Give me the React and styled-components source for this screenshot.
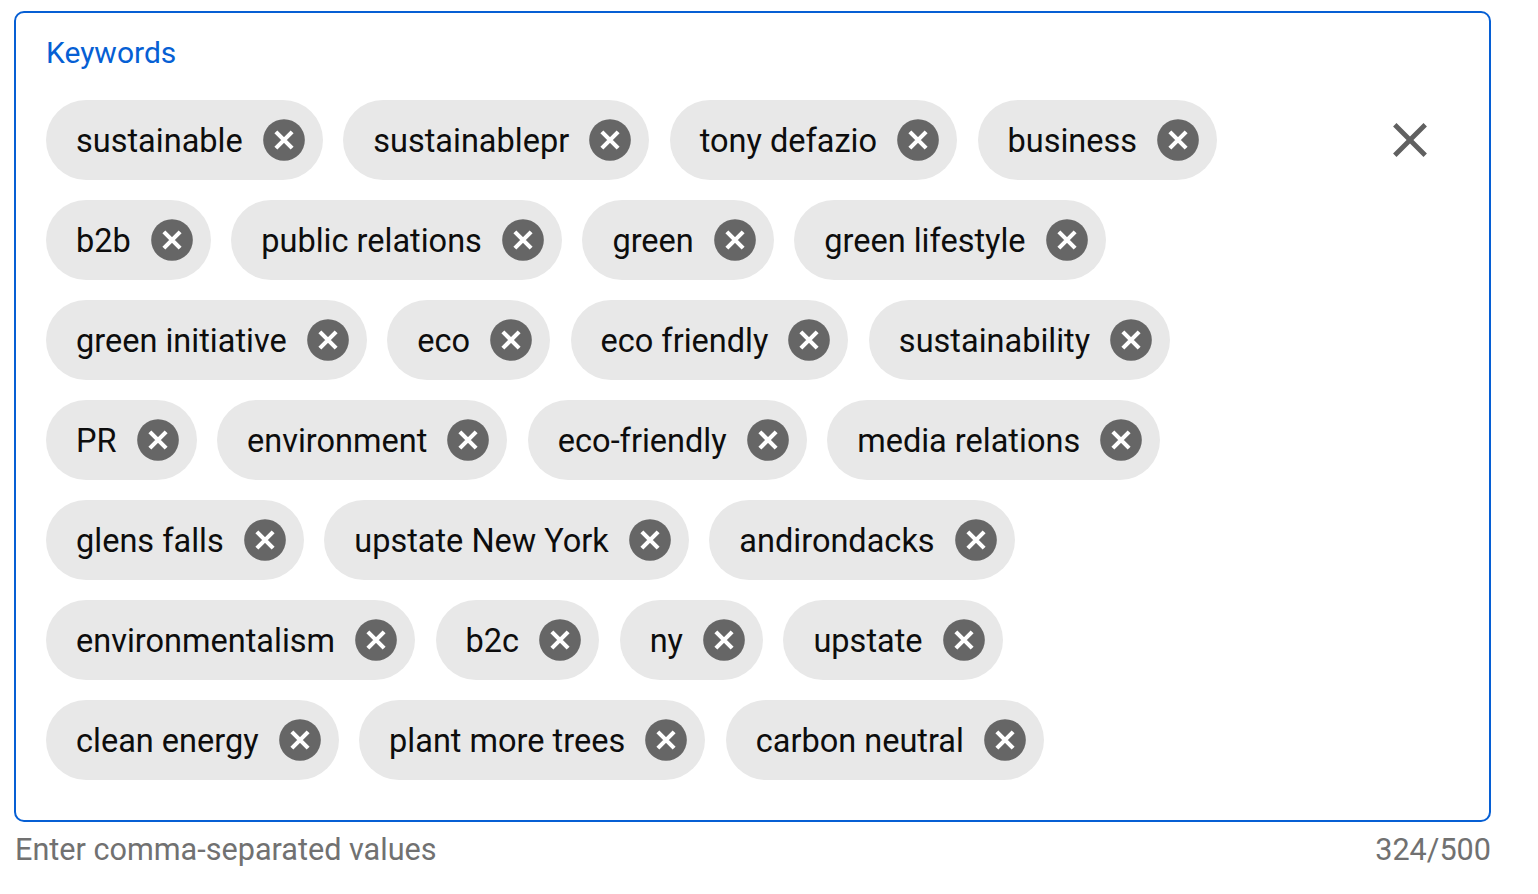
import React from 'react';
import styled, { createGlobalStyle } from 'styled-components';

const GlobalStyle = createGlobalStyle`
	html, body {
		margin: 0;
		padding: 0;
		background: #fff;
		font-family: Roboto, "Noto Sans", Arial, sans-serif;
	}
`;

const Page = styled.div`
	padding: 11px 0 0 14px;
	width: 1477px;
`;

const Field = styled.div`
	box-sizing: border-box;
	width: 100%;
	border: 2px solid #065fd4;
	border-radius: 10px;
	padding: 22px 0 40px 30px;
`;

const Label = styled.div`
	font-size: 30px;
	line-height: 36px;
	color: #065fd4;
	margin-bottom: 29px;
`;

const Body = styled.div`
	display: flex;
	align-items: flex-start;
`;

const ChipList = styled.div`
	flex: 1;
	display: flex;
	flex-wrap: wrap;
	gap: 20px 20.5px;
	margin-right: 120px;
`;

const Chip = styled.div`
	display: flex;
	align-items: center;
	height: 80px;
	box-sizing: border-box;
	padding: 0 14px 0 30px;
	border-radius: 40px;
	background: #e8e8e8;
	color: #0d0d0d;
	font-size: 32.5px;
	white-space: nowrap;
`;

const ChipText = styled.span`
	margin-right: 16px;
	line-height: 40px;
	padding-top: 2px;
`;

const RemoveIcon = styled.svg`
	width: 50px;
	height: 50px;
	flex: none;
	fill: #666;
`;

const ClearButton = styled.svg`
	width: 58px;
	height: 58px;
	flex: none;
	margin: 11px 50px 0 0;
	fill: #606060;
`;

const Footer = styled.div`
	display: flex;
	justify-content: space-between;
	margin-top: 10px;
	padding-left: 1px;
	font-size: 30.6px;
	line-height: 36px;
	color: #717171;
`;

const keywords = [
	'sustainable', 'sustainablepr', 'tony defazio', 'business',
	'b2b', 'public relations', 'green', 'green lifestyle',
	'green initiative', 'eco', 'eco friendly', 'sustainability',
	'PR', 'environment', 'eco-friendly', 'media relations',
	'glens falls', 'upstate New York', 'andirondacks',
	'environmentalism', 'b2c', 'ny', 'upstate',
	'clean energy', 'plant more trees', 'carbon neutral'
];

function KeywordChip({ text }) {
	return (
		<Chip>
			<ChipText>{text}</ChipText>
			<RemoveIcon viewBox="0 0 24 24">
				<circle cx="12" cy="12" r="10" />
				<path d="M8.1 8.1 L15.9 15.9 M15.9 8.1 L8.1 15.9" stroke="#fff" strokeWidth="2" fill="none" />
			</RemoveIcon>
		</Chip>
	);
}

export default function App() {
	return (
		<Page>
			<GlobalStyle />
			<Field>
				<Label>Keywords</Label>
				<Body>
					<ChipList>
						{keywords.map((k) => <KeywordChip key={k} text={k} />)}
					</ChipList>
					<ClearButton viewBox="0 0 24 24">
						<path d="M19 6.41L17.59 5 12 10.59 6.41 5 5 6.41 10.59 12 5 17.59 6.41 19 12 13.41 17.59 19 19 17.59 13.41 12z" />
					</ClearButton>
				</Body>
			</Field>
			<Footer>
				<span>Enter comma-separated values</span>
				<span>324/500</span>
			</Footer>
		</Page>
	);
}
